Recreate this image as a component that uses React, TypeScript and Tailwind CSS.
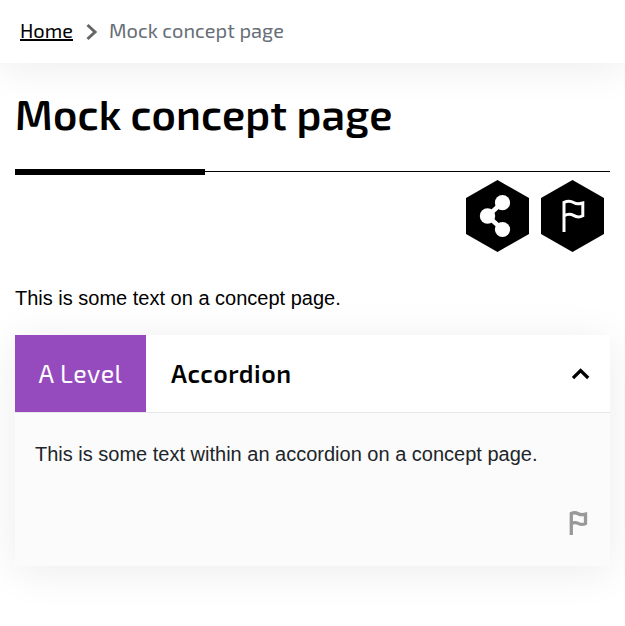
import React from "react";

const heading = "font-['Exo_2','Noto_Sans',sans-serif]";

function ShareButton() {
  return (
    <button aria-label="Share" className="h-[72px] w-[63px]">
      <svg width="63" height="72" viewBox="0 0 63 72" className="block">
        <path d="M31.5 0 63 18V54L31.5 72 0 54V18Z" fill="#000" />
        <path d="M36.5 22.5 21.5 36 36.5 49.5" fill="none" stroke="#fff" strokeWidth="4.5" />
        <circle cx="36.5" cy="22.7" r="7.6" fill="#fff" />
        <circle cx="21.5" cy="36" r="7.7" fill="#fff" />
        <circle cx="36.5" cy="49.5" r="7.6" fill="#fff" />
      </svg>
    </button>
  );
}

function FlagButton() {
  return (
    <button aria-label="Flag" className="h-[72px] w-[63px]">
      <svg width="63" height="72" viewBox="0 0 63 72" className="block">
        <path d="M31.5 0 63 18V54L31.5 72 0 54V18Z" fill="#000" />
        <path
          d="M23 52V22.4C26.5 20.8 30 20.9 33 22.8C36 24.8 38.5 24 41.8 23V35.8C38.5 37.6 35.5 37.2 32.5 35.4C29.5 33.8 26.5 34 23 35.8"
          fill="none"
          stroke="#fff"
          strokeWidth="3"
        />
      </svg>
    </button>
  );
}

export default function App() {
  return (
    <div className="h-[626px] w-[625px] overflow-hidden bg-white font-['Liberation_Sans',Arial,sans-serif] text-black">
      <nav className={`${heading} flex h-[63px] items-center pb-0.5 pl-5 text-[20px] leading-6 shadow-[0_5px_40px_rgba(0,0,0,0.08)]`}>
        <a href="#" className="-mt-0.5 w-[53px] whitespace-nowrap underline decoration-2 underline-offset-1">Home</a>
        <svg width="12" height="18" viewBox="0 0 12 18" className="ml-[13px] mt-0.5">
          <path d="M1.5 2 9 9 1.5 16" fill="none" stroke="#666" strokeWidth="3" />
        </svg>
        <span className="-mt-0.5 ml-[11px] whitespace-nowrap tracking-[0.05px] text-[#666e76]">Mock concept page</span>
      </nav>
      <main className="px-[15px]">
        <h1 className={`${heading} flex h-[106px] items-center whitespace-nowrap pb-1.5 text-[42px] font-semibold leading-[50px] tracking-[0.18px]`}>
          Mock concept page
        </h1>
        <div className="flex h-1.5 items-start">
          <div className="h-1.5 w-[190px] bg-black" />
          <div className="mt-0.5 h-px flex-1 bg-black" />
        </div>
        <div className="mt-[5px] flex justify-end gap-3 pr-[6px]">
          <ShareButton />
          <FlagButton />
        </div>
        <p className="mt-[31px] h-[52px] whitespace-nowrap text-[20px] leading-[30px]">This is some text on a concept page.</p>
        <section className="bg-[#fbfbfb] shadow-[0_5px_40px_rgba(0,0,0,0.08)]">
          <h2 className={`${heading} flex h-[78px] items-center border-b border-[#e7e7e7] bg-white text-[25px] tracking-[0.5px]`}>
            <span className="flex h-[77px] w-[131px] items-center justify-center whitespace-nowrap bg-[#954bbd] text-white">A Level</span>
            <span className="ml-[25px] font-semibold">Accordion</span>
            <svg width="18" height="12" viewBox="0 0 18 12" className="ml-auto mr-5">
              <path d="M1 10 8.6 2.5 16.2 10" fill="none" stroke="#000" strokeWidth="3.2" />
            </svg>
          </h2>
          <div className="flex h-[153px] flex-col justify-between pb-[30px] pl-5 pr-[22px] pt-[26px]">
            <p className="whitespace-nowrap text-[20px] leading-[30px] text-[#212529]">This is some text within an accordion on a concept page.</p>
            <svg width="19" height="25" viewBox="0 0 19 25" className="self-end">
              <path
                d="M2.3 24V2.6C4.5 1.5 7 1.5 9.2 2.7C11.5 4 13.5 4 16.5 3.2V12.6C14 13.9 11.5 13.6 9.2 12.4C7 11.3 4.5 11.5 2.3 12.6"
                fill="none"
                stroke="#999"
                strokeWidth="3.3"
              />
            </svg>
          </div>
        </section>
      </main>
    </div>
  );
}
